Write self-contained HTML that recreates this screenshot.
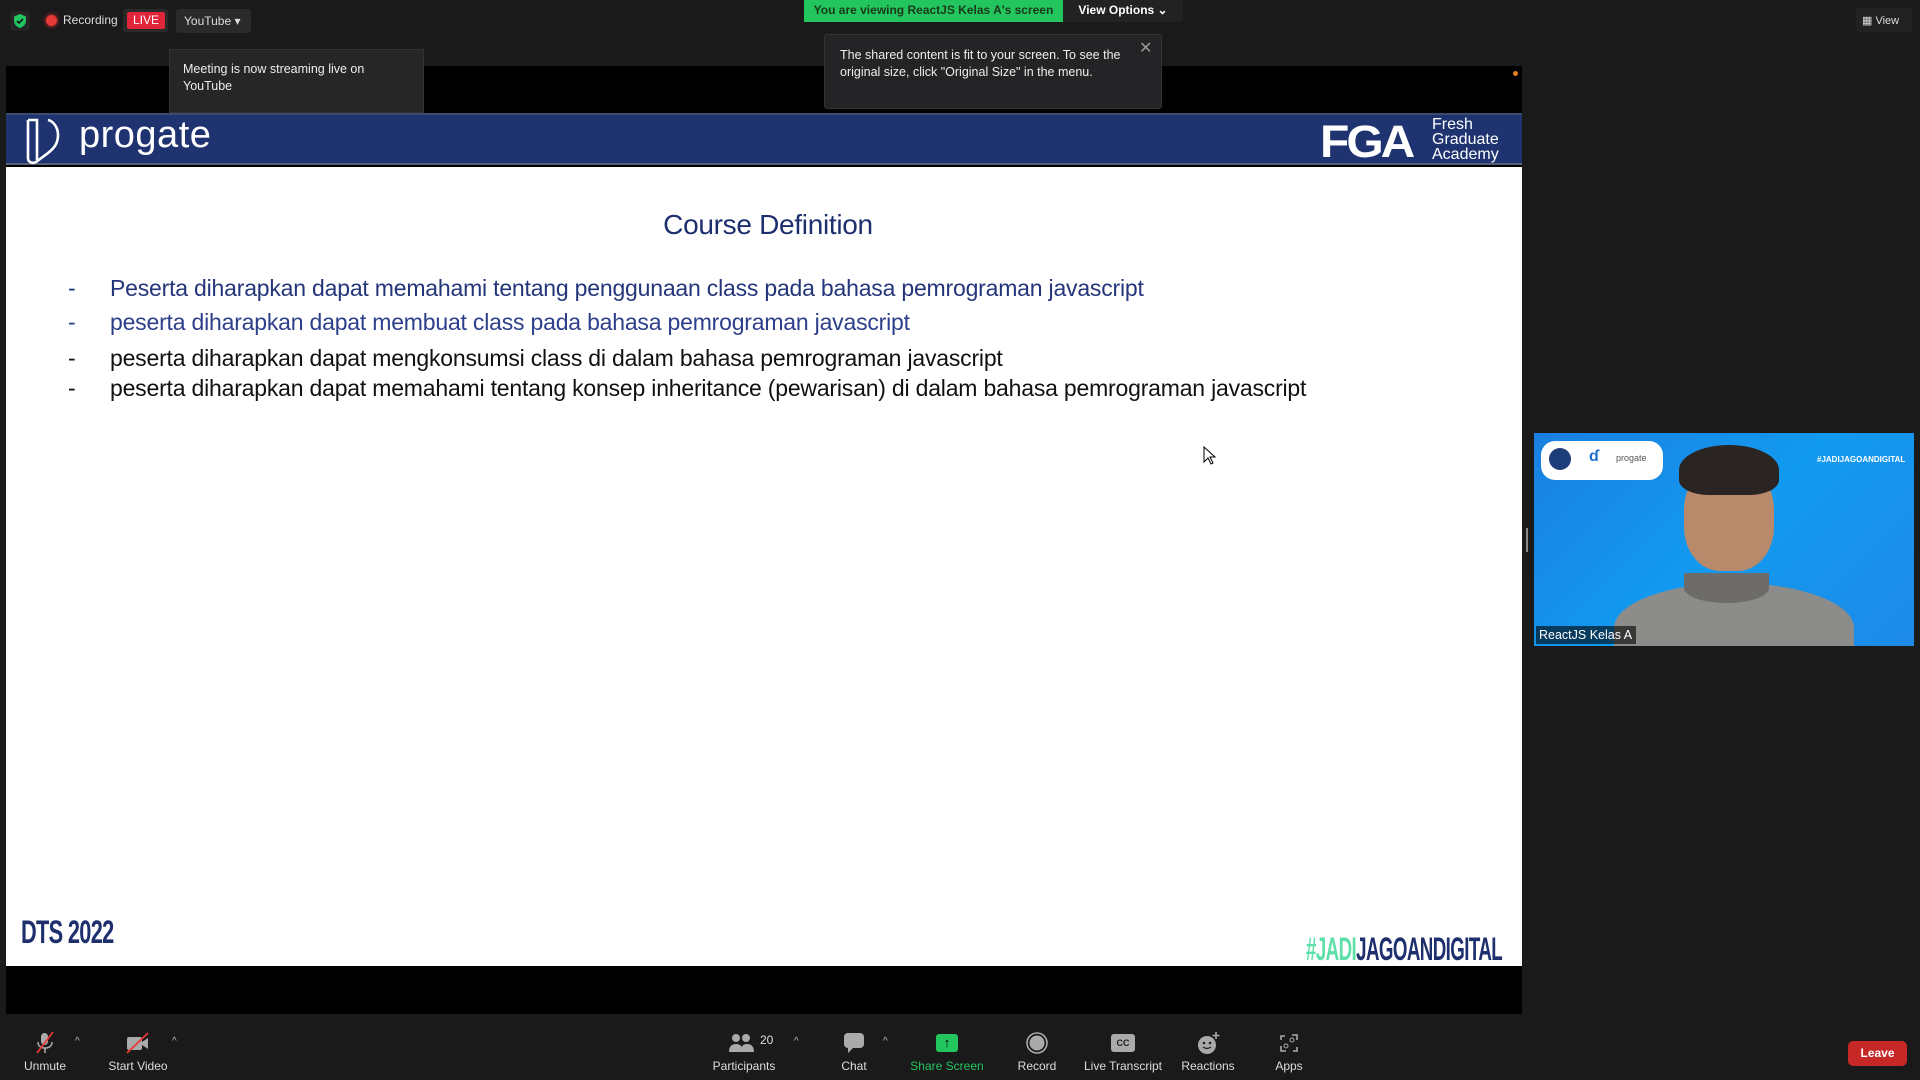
<!DOCTYPE html>
<html><head><meta charset="utf-8"><style>
*{margin:0;padding:0;box-sizing:border-box}
body{width:1920px;height:1080px;background:#1a1a1a;position:relative;overflow:hidden;font-family:"Liberation Sans",sans-serif;color:#fff}
.a{position:absolute}
.lbl{position:absolute;top:1059px;font-size:12px;color:#ddd;transform:translateX(-50%);white-space:nowrap}
.ic{position:absolute;transform:translate(-50%,-50%);top:1043px}
.car{position:absolute;top:1036px;font-size:10px;color:#bbb}
.bl{position:absolute;left:0;font-size:23px;white-space:nowrap;letter-spacing:-0.2px}
.bl b{font-weight:normal;position:absolute;left:-42px}
</style></head><body>
<!-- slide -->
<div class="a" style="left:6px;top:66px;width:1516px;height:948px;background:#000"></div>
<div class="a" style="left:1513px;top:71px;width:5px;height:5px;border-radius:50%;background:#e67e22"></div>
<div class="a" style="left:6px;top:113px;width:1516px;height:52px;background:#1e3370;border-top:2px solid #3a4a70;border-bottom:2px solid #56607a"></div>
<svg class="a" style="left:23px;top:116px" width="40" height="50" viewBox="0 0 40 50"><path d="M5 4h9v40M5 4v38c0 4 4 6 8 4l8-6c10-7 14-12 14-21C35 11 30 5 25 4" stroke="#fff" stroke-width="2.6" fill="none"/></svg>
<div class="a" style="left:79px;top:114px;font-size:38px;color:#fff;letter-spacing:0.5px">progate</div>
<div class="a" style="left:1320px;top:115px;font-size:48px;font-weight:bold;color:#fff;letter-spacing:-3px;transform:scaleY(0.95)">FGA</div>
<div class="a" style="left:1432px;top:117px;font-size:16px;line-height:15px;color:#fff">Fresh<br>Graduate<br>Academy</div>
<div class="a" style="left:6px;top:167px;width:1516px;height:799px;background:#fff"></div>
<div class="a" style="left:0;width:1536px;top:209px;text-align:center;font-size:28px;color:#1e2f6e;letter-spacing:-0.3px">Course Definition</div>
<div class="a" style="left:110px;top:0">
<div class="bl" style="top:275px;color:#24357a"><b>-</b>Peserta diharapkan dapat memahami tentang penggunaan class pada bahasa pemrograman javascript</div>
<div class="bl" style="top:309px;color:#2d3f8a"><b>-</b>peserta diharapkan dapat membuat class pada bahasa pemrograman javascript</div>
<div class="bl" style="top:345px;color:#111"><b>-</b>peserta diharapkan dapat mengkonsumsi class di dalam bahasa pemrograman javascript</div>
<div class="bl" style="top:375px;color:#111"><b>-</b>peserta diharapkan dapat memahami tentang konsep inheritance (pewarisan) di dalam bahasa pemrograman javascript</div>
</div>
<svg class="a" style="left:1203px;top:446px" width="13" height="19" viewBox="0 0 13 19"><path d="M1 1v15l4-4 3 6 2-1-3-6h5z" fill="#fff" stroke="#000"/></svg>
<div class="a" style="left:21px;top:914px;font-size:32px;font-weight:bold;color:#1e2f6e;transform:scaleX(0.68);transform-origin:left;letter-spacing:-1px">DTS 2022</div>
<div class="a" style="left:1306px;top:931px;font-size:32px;font-weight:bold;color:#1e2f6e;transform:scaleX(0.585);transform-origin:left;letter-spacing:-1px;white-space:nowrap"><span style="color:#5ee0a8">#JADI</span>JAGOANDIGITAL</div>
<!-- top bar -->
<div class="a" style="left:10px;top:11px;width:20px;height:20px;background:#242424;border-radius:3px"></div>
<svg class="a" style="left:13px;top:13px" width="14" height="16" viewBox="0 0 14 16"><path d="M7 1L1 3.5V8c0 3.5 3 6 6 7 3-1 6-3.5 6-7V3.5z" fill="#22c55e"/><path d="M4 8l2 2 4-4" stroke="#111" stroke-width="1.6" fill="none"/></svg>
<div class="a" style="left:46px;top:15px;width:11px;height:11px;border-radius:50%;background:#e53935;box-shadow:0 0 4px #e53935"></div>
<div class="a" style="left:63px;top:13px;font-size:12px;color:#ddd">Recording</div>
<div class="a" style="left:123px;top:9px;width:45px;height:23px;background:#2a2a2a;border-radius:3px"></div>
<div class="a" style="left:127px;top:12px;width:38px;height:17px;background:#e0243a;border-radius:2px;font-size:12px;text-align:center;line-height:17px">LIVE</div>
<div class="a" style="left:176px;top:9px;width:75px;height:24px;background:#2a2a2a;border-radius:3px;font-size:12px;color:#ddd;padding:5px 8px">YouTube ▾</div>
<div class="a" style="left:169px;top:49px;width:255px;height:64px;background:#262626;border:1px solid #333;font-size:12.5px;color:#eee;padding:11px 13px;line-height:17px">Meeting is now streaming live on YouTube</div>
<div class="a" style="left:804px;top:0;width:259px;height:22px;background:#22c55e;color:#1a3a1a;font-size:12px;font-weight:bold;text-align:center;line-height:21px">You are viewing ReactJS Kelas A's screen</div>
<div class="a" style="left:1063px;top:0;width:120px;height:22px;background:#222;font-size:12px;font-weight:bold;text-align:center;line-height:21px">View Options ⌄</div>
<div class="a" style="left:824px;top:34px;width:338px;height:75px;background:#242426;border:1px solid #333;border-radius:3px;font-size:12.5px;color:#eee;padding:12px 15px;line-height:17px">The shared content is fit to your screen. To see the original size, click "Original Size" in the menu.</div>
<div class="a" style="left:1139px;top:38px;font-size:16px;color:#999">✕</div>
<div class="a" style="left:1856px;top:8px;width:56px;height:24px;background:#222;border-radius:3px;font-size:11px;color:#ddd;padding:6px 6px;white-space:nowrap">▦ View</div>
<!-- video -->
<div class="a" style="left:1534px;top:433px;width:380px;height:213px;background:linear-gradient(135deg,#1a7fe0,#129af0 50%,#1e8ae8);overflow:hidden">
<div class="a" style="left:7px;top:8px;width:122px;height:39px;background:#fff;border-radius:14px"></div>
<div class="a" style="left:15px;top:15px;width:22px;height:22px;border-radius:50%;background:#1d3c7a"></div>
<div class="a" style="left:55px;top:15px;font-size:16px;color:#1d6fd0;font-weight:bold">ɗ</div>
<div class="a" style="left:82px;top:20px;font-size:9px;color:#555">progate</div>
<div class="a" style="left:283px;top:22px;font-size:8px;font-weight:bold;color:#fff">#JADIJAGOANDIGITAL</div>
<div class="a" style="left:217px;top:21px;font-size:18px;font-weight:bold;color:#fff">A</div>
<div class="a" style="left:80px;top:150px;width:240px;height:90px;border-radius:50% 50% 0 0;background:#8c8c8a"></div>
<div class="a" style="left:150px;top:28px;width:90px;height:110px;border-radius:45% 45% 40% 40%;background:#b8896a"></div>
<div class="a" style="left:145px;top:12px;width:100px;height:50px;border-radius:50% 50% 30% 30%;background:#2a2422"></div>
<div class="a" style="left:150px;top:140px;width:85px;height:30px;border-radius:0 0 50% 50%;background:#6e6c6a"></div>
<div class="a" style="left:2px;top:193px;width:100px;height:18px;background:rgba(0,0,0,.6);font-size:12.5px;color:#fff;padding:2px 3px">ReactJS Kelas A</div>
</div>
<div class="a" style="left:1526px;top:528px;width:2px;height:24px;border-left:1px solid #888;border-right:1px solid #888"></div>
<!-- toolbar -->
<svg class="ic" style="left:45px" width="22" height="24" viewBox="0 0 22 24"><rect x="7" y="2" width="7" height="12" rx="3.5" fill="#aaa"/><path d="M4 11c0 4 3 6 7 6s7-2 7-6M11 17v5" stroke="#aaa" stroke-width="1.6" fill="none"/><path d="M3 22L19 1" stroke="#e53935" stroke-width="1.8"/></svg>
<div class="car" style="left:75px">^</div>
<div class="lbl" style="left:45px">Unmute</div>
<svg class="ic" style="left:138px" width="26" height="22" viewBox="0 0 26 22"><rect x="2" y="5" width="15" height="13" rx="2" fill="#aaa"/><path d="M17 10l6-4v11l-6-4z" fill="#aaa"/><path d="M2 21L23 1" stroke="#e53935" stroke-width="1.8"/></svg>
<div class="car" style="left:172px">^</div>
<div class="lbl" style="left:138px">Start Video</div>
<svg class="ic" style="left:742px" width="26" height="20" viewBox="0 0 26 20"><circle cx="7" cy="5" r="4" fill="#aaa"/><circle cx="17" cy="5" r="4" fill="#aaa"/><path d="M0 19c0-6 3-8 7-8s7 2 7 8zM12 19c0-6 2-8 6-8s7 2 7 8z" fill="#aaa"/></svg>
<div class="a" style="left:760px;top:1033px;font-size:12px;color:#ddd">20</div>
<div class="car" style="left:794px">^</div>
<div class="lbl" style="left:744px">Participants</div>
<svg class="ic" style="left:854px" width="22" height="22" viewBox="0 0 22 22"><rect x="1" y="1" width="20" height="15" rx="4" fill="#aaa"/><path d="M5 15v6l5-5z" fill="#aaa"/></svg>
<div class="car" style="left:883px">^</div>
<div class="lbl" style="left:854px">Chat</div>
<div class="ic" style="left:947px;width:22px;height:18px;background:#22c55e;border-radius:3px;color:#000;font-size:13px;text-align:center;line-height:18px;font-weight:bold">↑</div>
<div class="lbl" style="left:947px;color:#22c55e">Share Screen</div>
<svg class="ic" style="left:1037px" width="22" height="22" viewBox="0 0 22 22"><circle cx="11" cy="11" r="10" stroke="#aaa" stroke-width="1.6" fill="none"/><circle cx="11" cy="11" r="7.5" fill="#aaa"/></svg>
<div class="lbl" style="left:1037px">Record</div>
<div class="ic" style="left:1123px;width:24px;height:18px;background:#aaa;border-radius:3px;color:#222;font-size:9px;text-align:center;line-height:18px;font-weight:bold">CC</div>
<div class="lbl" style="left:1123px">Live Transcript</div>
<svg class="ic" style="left:1209px" width="24" height="24" viewBox="0 0 24 24"><circle cx="10" cy="14" r="9" fill="#aaa"/><circle cx="7" cy="12" r="1.3" fill="#222"/><circle cx="13" cy="12" r="1.3" fill="#222"/><path d="M6 16q4 3 8 0" stroke="#222" stroke-width="1.4" fill="none"/><path d="M19 1v7M15.5 4.5h7" stroke="#aaa" stroke-width="1.6"/></svg>
<div class="lbl" style="left:1208px">Reactions</div>
<svg class="ic" style="left:1289px" width="18" height="18" viewBox="0 0 18 18"><path d="M1 6V2h4M13 17h4v-4M1 12v5h5M17 6V1h-5" stroke="#aaa" stroke-width="1.6" fill="none"/><circle cx="12" cy="6" r="2" stroke="#aaa" fill="none"/><circle cx="6" cy="12" r="2" stroke="#aaa" fill="none"/></svg>
<div class="lbl" style="left:1289px">Apps</div>
<div class="a" style="left:1848px;top:1041px;width:59px;height:25px;background:#c62828;border-radius:5px;font-size:12px;font-weight:bold;text-align:center;line-height:25px">Leave</div>
</body></html>
